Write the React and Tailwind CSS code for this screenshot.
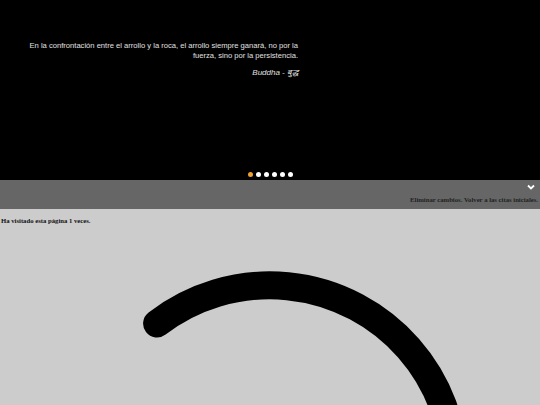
import React from 'react';

const quote = {
  text: 'En la confrontación entre el arrollo y la roca, el arrollo siempre ganará, no por la fuerza, sino por la persistencia.',
  author: 'Buddha - बुद्ध',
};

const dots = [0, 1, 2, 3, 4, 5];

export default function App() {
  return (
    <div className="min-h-screen bg-[#cccccc]">
      {/* Quote slider */}
      <section className="relative h-[180px] bg-black">
        <div className="w-[298px] pl-[27px] pt-[41px] text-right font-['Liberation_Sans',Arial,sans-serif] text-[7.6px] leading-[10px] text-[#e0e0e0]">
          <p>{quote.text}</p>
          <p className="mt-[7px] text-[8px] italic">{quote.author}</p>
        </div>
        <div className="absolute left-[248px] top-[172px] flex gap-[3px]">
          {dots.map((d) => (
            <span
              key={d}
              className={d === 0 ? 'block h-[5px] w-[5px] rounded-full bg-[#f0a030]' : 'block h-[5px] w-[5px] rounded-full bg-white'}
            />
          ))}
        </div>
      </section>

      {/* Reset bar */}
      <section className="flex h-[29px] flex-col items-end bg-[#666666] pr-[2px]">
        <svg width="8" height="6" viewBox="0 0 8 6" className="mr-[3px] mt-[4px]">
          <path d="M1 1.5 L4 4.5 L7 1.5" fill="none" stroke="white" strokeWidth="1.8" />
        </svg>
        <p className="mt-[5px] font-['Liberation_Serif','Times_New_Roman',serif] text-[6.7px] font-bold leading-[10px] text-[#222222]">
          Eliminar cambios. Volver a las citas iniciales.
        </p>
      </section>

      {/* Visits */}
      <p className="pl-[1px] pt-[7px] font-['Liberation_Serif','Times_New_Roman',serif] text-[6.7px] font-bold leading-[10px] text-[#111111]">
        Ha visitado esta página 1 veces.
      </p>

      {/* Spinner */}
      <svg width="540" height="400" viewBox="0 0 540 400" className="mt-[4px] block">
        <path
          d="M157.1 93.5 A185 185 0 0 1 400.8 370.8"
          fill="none"
          stroke="black"
          strokeWidth="28"
          strokeLinecap="round"
        />
      </svg>
    </div>
  );
}
